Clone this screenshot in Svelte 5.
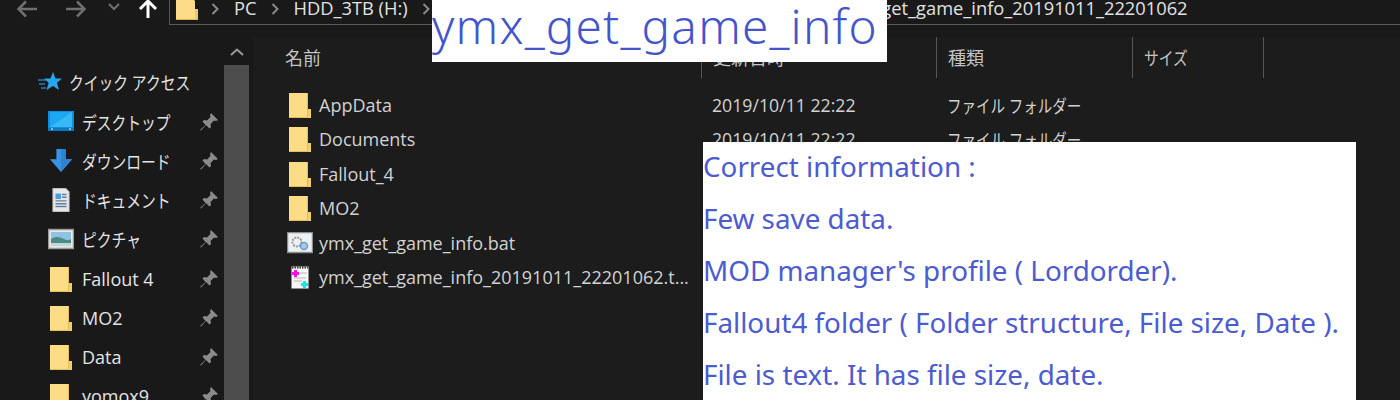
<script>
	var pinned = [
		{ name: "デスクトップ", icon: "desktop", kana: true },
		{ name: "ダウンロード", icon: "download", kana: true },
		{ name: "ドキュメント", icon: "doc", kana: true },
		{ name: "ピクチャ", icon: "picture", kana: true },
		{ name: "Fallout 4", icon: "folder" },
		{ name: "MO2", icon: "folder" },
		{ name: "Data", icon: "folder" },
		{ name: "yomox9", icon: "folder" },
	];

	var files = [
		{ name: "AppData", icon: "folder", date: "2019/10/11 22:22", type: "ファイル フォルダー" },
		{ name: "Documents", icon: "folder", date: "2019/10/11 22:22", type: "ファイル フォルダー" },
		{ name: "Fallout_4", icon: "folder" },
		{ name: "MO2", icon: "folder" },
		{ name: "ymx_get_game_info.bat", icon: "bat" },
		{ name: "ymx_get_game_info_20191011_22201062.t...", icon: "note" },
	];

	var info = [
		"Correct information :",
		"Few save data.",
		"MOD manager's profile ( Lordorder).",
		"Fallout4 folder ( Folder structure, File size, Date ).",
		"File is text. It has file size, date.",
	];
</script>

{#snippet folder()}
	<svg class="folder" viewBox="0 0 22 26">
		<path d="M0 1h18l1 1v24H0z" fill="#fbdc87" />
		<path d="M18 1h1v16h3v9H0v-1h18z" fill="#e9bd55" />
		<path d="M19 17h3v9h-3z" fill="#f4cd6b" />
	</svg>
{/snippet}

{#snippet chevron()}
	<svg class="chevron" viewBox="0 0 8 12"><path d="M1.5 1l5 5-5 5" fill="none" stroke="#8a8a8a" stroke-width="2" /></svg>
{/snippet}

{#snippet icon(kind)}
	{#if kind == "folder"}
		{@render folder()}
	{:else if kind == "desktop"}
		<svg class="ico" viewBox="0 0 26 22">
			<rect x="0" y="0" width="26" height="20" fill="#0f8fe0" />
			<path d="M2 1h22v15H2z" fill="#1ba8f2" />
			<path d="M2 16L24 1v15z" fill="#38b8f5" />
			<path d="M0 17h26v3H0z" fill="#0a79c4" />
			<path d="M3 18h2M21 18h2" stroke="#dff" stroke-width="1" />
		</svg>
	{:else if kind == "download"}
		<svg class="ico" viewBox="0 0 26 26">
			<path d="M8 0h10v11h7L13 25 1 11h7z" fill="#3a92e0" />
			<path d="M13 0h5v11h7L13 25z" fill="#2d82d2" />
		</svg>
	{:else if kind == "doc"}
		<svg class="ico" viewBox="0 0 26 26">
			<path d="M4 0h14l4 4v22H4z" fill="#e8e8e8" stroke="#8c8c8c" />
			<path d="M7 6h6v6H7z" fill="#4aa0de" />
			<path d="M14 7h5M14 10h5M7 14h12M7 17h12M7 20h12" stroke="#5f7f9c" stroke-width="1.5" />
		</svg>
	{:else if kind == "picture"}
		<svg class="ico" viewBox="0 0 26 22">
			<rect x="0.5" y="1.5" width="25" height="19" fill="#e8e8e8" stroke="#999" stroke-width="1.5" />
			<path d="M3 4h20v14H3z" fill="#8fc3e2" />
			<path d="M3 11c5-3 9-2 13 0s5 1 7 0v7H3z" fill="#4c8a84" />
			<path d="M3 15h20v3H3z" fill="#bcd8d8" />
		</svg>
	{/if}
{/snippet}

{#snippet pin()}
	<svg class="pin" viewBox="0 0 18 18">
		<path d="M11 0l7 7-2 1-2-.5L10.500 11l.5 3-1.500 1.500L6 12l-5 5.500L0 17l5.500-5L2.500 8.500 4 7l3 .5L10.500 4 10 2z" fill="#8b8b8b" />
	</svg>
{/snippet}

<div class="window">
	<div class="toolbar">
		<div class="nav">
			<svg class="arrow" viewBox="0 0 22 18"><path d="M21 9H3M10 1.500L2.500 9l7.500 7.500" fill="none" stroke="#6f6f6f" stroke-width="2.500" /></svg>
			<svg class="arrow" viewBox="0 0 22 18"><path d="M1 9h18M12 1.500L19.500 9 12 16.500" fill="none" stroke="#6f6f6f" stroke-width="2.500" /></svg>
			<svg class="down" viewBox="0 0 12 8"><path d="M1 1l5 5 5-5" fill="none" stroke="#6f6f6f" stroke-width="2" /></svg>
			<svg class="up" viewBox="0 0 20 20"><path d="M10 19V2M2 10l8-8 8 8" fill="none" stroke="#fff" stroke-width="3" /></svg>
		</div>
		<div class="address">
			<svg class="addr-folder" viewBox="0 0 22 20">
				<path d="M0 0h18l1 1v19H0z" fill="#fbdc87" />
				<path d="M19 9h3v11h-3z" fill="#f0c865" />
				<path d="M0 19h22v1H0z" fill="#e0b24e" />
			</svg>
			{@render chevron()}
			<span class="crumb">PC</span>
			{@render chevron()}
			<span class="crumb">HDD_3TB (H:)</span>
			{@render chevron()}
			<span class="crumb last">ymx_get_game_info_20191011_22201062</span>
		</div>
	</div>

	<div class="body">
		<nav class="sidebar">
			<div class="quick">
				<svg class="star" viewBox="0 0 24 20">
					<path d="M0 8h8M1 12h6M3 16h5" stroke="#1c7fc4" stroke-width="1.500" />
					<path d="M15 0l2.500 6.500H24l-5 4.300L21 18l-6-4-6.500 4 2.200-7.200L6 6.500h6.500z" fill="#2aa5f0" />
				</svg>
				<span class="kana">クイック アクセス</span>
			</div>
			{#each pinned as item}
				<div class="side-row">
					<span class="side-icon">{@render icon(item.icon)}</span>
					<span class="side-name"><span class:kana={item.kana}>{item.name}</span></span>
					{@render pin()}
				</div>
			{/each}
		</nav>

		<div class="scrollbar">
			<svg class="scroll-up" viewBox="0 0 14 8"><path d="M1 7l6-5.500L13 7" fill="none" stroke="#9a9a9a" stroke-width="2" /></svg>
			<div class="thumb"></div>
		</div>

		<main class="list">
			<div class="head">
				<div class="col name">名前</div>
				<div class="col date">更新日時</div>
				<div class="col type">種類</div>
				<div class="col size"><span class="kana">サイズ</span></div>
			</div>
			{#each files as file}
				<div class="row">
					<div class="file">
						<span class="file-icon">
							{#if file.icon == "folder"}
								{@render folder()}
							{:else if file.icon == "bat"}
								<svg class="bat" viewBox="0 0 26 22">
									<rect x="0.500" y="0.500" width="25" height="20" fill="#eef1f4" stroke="#8d8d8d" stroke-width="1.500" />
									<circle cx="10" cy="10" r="4.500" fill="none" stroke="#9a9a9a" stroke-width="2" stroke-dasharray="2 1" />
									<circle cx="17" cy="14" r="3.500" fill="#a8cbe8" stroke="#6b9cc7" stroke-width="1.500" />
								</svg>
							{:else}
								<svg class="note" viewBox="0 0 20 25">
									<rect x="1" y="1" width="18" height="23" fill="#f7f7f7" stroke="#222" />
									<path d="M2 2.500h16" stroke="#333" stroke-width="2" stroke-dasharray="1.500 1" />
									<path d="M9 8h8M4 13h12M4 16h8" stroke="#b6b6b6" />
									<path d="M2 7h2V5h3v2h2v3H7v2H4v-2H2z" fill="#f010e0" />
									<path d="M11 18h2v-2h3v2h2v3h-2v2h-3v-2h-2z" fill="#10e8ea" />
								</svg>
							{/if}
						</span>
						<span>{file.name}</span>
					</div>
					{#if file.date}
						<div class="cell date-cell">{file.date}</div>
						<div class="cell type-cell"><span class="kana">{file.type}</span></div>
					{/if}
				</div>
			{/each}
		</main>
	</div>

	<div class="title-box">ymx_get_game_info</div>
	<div class="info-box">
		{#each info as line}
			<p>{line}</p>
		{/each}
	</div>
</div>

<style>
	:global(body) {
		margin: 0;
		background: #191919;
	}
	.window {
		position: relative;
		width: 1400px;
		height: 400px;
		overflow: hidden;
		background: #191919;
		color: #d8d8d8;
		font-family: "Open Sans", "Noto Sans CJK JP", sans-serif;
		font-size: 18px;
	}
	/* the kana in the reference are much narrower than the Noto ones */
	.kana {
		display: inline-block;
		transform: scaleX(0.82);
		transform-origin: left center;
		white-space: nowrap;
	}

	.toolbar {
		display: flex;
		height: 37px;
	}
	.nav {
		display: flex;
		width: 169px;
		height: 18px;
		padding-left: 16px;
		box-sizing: border-box;
		align-items: center;
	}
	.arrow {
		width: 22px;
		height: 18px;
		margin-right: 27px;
	}
	.down {
		width: 12px;
		height: 8px;
		margin: -4px 0 0 -6px;
	}
	.up {
		width: 20px;
		height: 20px;
		margin-left: 18px;
	}
	.address {
		display: flex;
		align-items: flex-start;
		flex: 1;
		height: 25px;
		box-sizing: border-box;
		border-left: 1px solid #555;
		border-bottom: 1px solid #5a5a5a;
		padding-left: 6px;
		white-space: nowrap;
		line-height: 16px;
		font-size: 18.3px;
	}
	.addr-folder {
		width: 22px;
		height: 20px;
		flex: none;
	}
	.chevron {
		width: 8px;
		height: 12px;
		flex: none;
		margin: 3px 15px 0 13px;
	}
	.crumb {
		color: #e2e2e2;
		margin-right: 1px;
	}
	.crumb.last {
		margin-left: 393px;
	}

	.body {
		display: flex;
		height: 363px;
	}
	.sidebar {
		width: 224px;
		flex: none;
		padding-top: 26px;
		box-sizing: border-box;
	}
	.quick {
		display: flex;
		align-items: center;
		height: 38px;
		padding-left: 38px;
		padding-bottom: 1px;
		color: #e4e4e4;
	}
	.star {
		width: 24px;
		height: 20px;
		margin-right: 7px;
		flex: none;
	}
	.side-row {
		display: flex;
		align-items: center;
		height: 39.25px;
		padding-left: 48px;
		color: #e4e4e4;
	}
	.side-icon {
		display: flex;
		justify-content: center;
		width: 26px;
		margin-right: 8px;
	}
	.side-name {
		flex: 1;
	}
	.pin {
		width: 18px;
		height: 18px;
		margin-right: 6px;
	}
	.folder {
		display: block;
		width: 22px;
		height: 26px;
	}
	.ico {
		display: block;
		width: 26px;
		height: 24px;
	}
	.scrollbar {
		width: 25px;
		flex: none;
		display: flex;
		flex-direction: column;
		align-items: center;
	}
	.scroll-up {
		width: 14px;
		height: 8px;
		margin-top: 11px;
		margin-bottom: 9px;
	}
	.thumb {
		flex: 1;
		width: 100%;
		background: #4d4d4d;
	}

	.list {
		flex: 1;
		margin-left: 4px;
		background: #1c1c1c;
	}
	.head {
		display: flex;
		height: 41px;
		color: #c4c4c4;
	}
	.col {
		box-sizing: border-box;
		padding: 7px 0 0 11px;
		border-right: 1px solid #555;
	}
	.col.name {
		width: 449px;
		padding-left: 32px;
	}
	.col.date {
		width: 235px;
	}
	.col.type {
		width: 196px;
	}
	.col.size {
		width: 131px;
	}
	.row {
		display: flex;
		align-items: center;
		height: 34.5px;
		color: #d2d2d2;
	}
	.head + .row {
		margin-top: 9.5px;
	}
	.file {
		display: flex;
		align-items: center;
		width: 459px;
		padding-left: 36px;
		box-sizing: border-box;
		white-space: nowrap;
	}
	.file-icon {
		display: flex;
		justify-content: center;
		width: 22px;
		margin-right: 8px;
	}
	.bat {
		display: block;
		flex: none;
		width: 26px;
		height: 22px;
	}
	.note {
		display: block;
		flex: none;
		width: 20px;
		height: 25px;
	}
	.cell {
		font-size: 17.7px;
	}
	.date-cell {
		width: 235px;
	}

	.title-box {
		position: absolute;
		left: 432px;
		top: 0;
		width: 455px;
		height: 62px;
		background: #fff;
		color: #4455cc;
		font-family: "Noto Sans", sans-serif;
		font-size: 47.7px;
		font-weight: 300;
		letter-spacing: 1.2px;
		line-height: 52px;
	}
	.info-box {
		position: absolute;
		left: 703px;
		top: 142px;
		width: 653px;
		height: 258px;
		box-sizing: border-box;
		background: #fff;
		color: #4c5bd0;
		font-family: "Noto Sans", sans-serif;
		font-size: 27.8px;
		line-height: 52px;
		overflow: hidden;
	}
	.info-box p {
		margin: 0;
		white-space: nowrap;
	}
	.info-box p:first-child {
		margin-top: -2px;
	}
</style>
